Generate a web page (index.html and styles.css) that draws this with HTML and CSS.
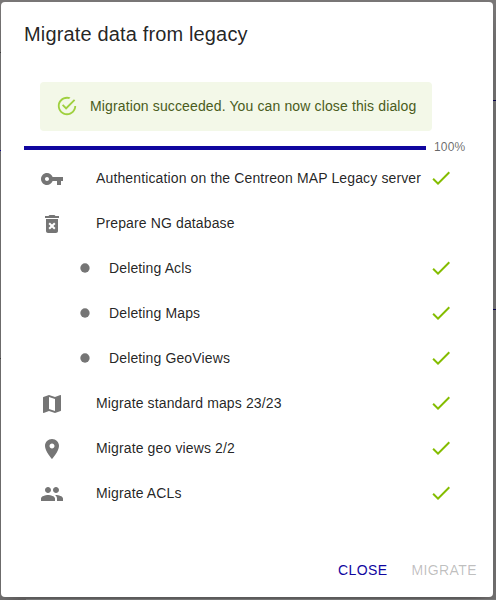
FILE: index.html
```html
<!DOCTYPE html>
<html lang="en">
<head>
<meta charset="utf-8">
<title>Migrate data from legacy</title>
<link rel="stylesheet" href="styles.css">
</head>
<body>
<svg class="symbols" aria-hidden="true">
  <symbol id="check" viewBox="0 0 24 24"><path d="M9 16.17 4.83 12l-1.42 1.41L9 19 21 7l-1.41-1.41z"/></symbol>
</svg>
<i class="mark left m1"></i><i class="mark left m2"></i><i class="mark left m3"></i>
<i class="mark right m4"></i><i class="mark right m5"></i>
<main class="dialog" role="dialog">
  <h2 class="title">Migrate data from legacy</h2>
  <div class="alert">
    <svg class="alert-icon" viewBox="0 0 24 24"><path d="M20 12c0 4.42-3.58 8-8 8s-8-3.58-8-8 3.58-8 8-8c.76 0 1.5.11 2.2.31l1.57-1.57C14.61 2.26 13.34 2 12 2 6.48 2 2 6.48 2 12s4.48 10 10 10 10-4.48 10-10h-2zM7.91 10.08 6.5 11.5 11 16 21 6l-1.41-1.42L11 13.17z"/></svg>
    <span>Migration succeeded. You can now close this dialog</span>
  </div>
  <div class="progress"><div class="bar"></div><span class="percent">100%</span></div>
  <ul class="steps">
    <li class="step">
      <svg class="icon" viewBox="0 0 24 24"><path d="M12.65 10C11.83 7.67 9.61 6 7 6c-3.31 0-6 2.69-6 6s2.69 6 6 6c2.61 0 4.83-1.67 5.65-4H17v4h4v-4h2v-4H12.65zM7 14c-1.1 0-2-.9-2-2s.9-2 2-2 2 .9 2 2-.9 2-2 2z"/></svg>
      <span class="label">Authentication on the Centreon MAP Legacy server</span><svg class="check"><use href="#check"/></svg>
    </li>
    <li class="step">
      <svg class="icon" viewBox="0 0 24 24"><path d="M6 19c0 1.1.9 2 2 2h8c1.1 0 2-.9 2-2V7H6v12zm2.46-7.12 1.41-1.41L12 12.59l2.12-2.12 1.41 1.41L13.41 14l2.12 2.12-1.41 1.41L12 15.41l-2.12 2.12-1.41-1.41L10.59 14l-2.13-2.12zM15.5 4l-1-1h-5l-1 1H5v2h14V4z"/></svg>
      <span class="label">Prepare NG database</span>
    </li>
    <li class="step sub"><svg class="dot" viewBox="0 0 24 24"><circle cx="12" cy="12" r="8"/></svg><span class="label">Deleting Acls</span><svg class="check"><use href="#check"/></svg></li>
    <li class="step sub"><svg class="dot" viewBox="0 0 24 24"><circle cx="12" cy="12" r="8"/></svg><span class="label">Deleting Maps</span><svg class="check"><use href="#check"/></svg></li>
    <li class="step sub"><svg class="dot" viewBox="0 0 24 24"><circle cx="12" cy="12" r="8"/></svg><span class="label">Deleting GeoViews</span><svg class="check"><use href="#check"/></svg></li>
    <li class="step">
      <svg class="icon" viewBox="0 0 24 24"><path d="m20.5 3-.16.03L15 5.1 9 3 3.36 4.9c-.21.07-.36.25-.36.48V20.5c0 .28.22.5.5.5l.16-.03L9 18.9l6 2.1 5.64-1.9c.21-.07.36-.25.36-.48V3.5c0-.28-.22-.5-.5-.5zM15 19l-6-2.11V5l6 2.11V19z"/></svg>
      <span class="label">Migrate standard maps 23/23</span><svg class="check"><use href="#check"/></svg>
    </li>
    <li class="step">
      <svg class="icon" viewBox="0 0 24 24"><path d="M12 2C8.13 2 5 5.13 5 9c0 5.25 7 13 7 13s7-7.75 7-13c0-3.87-3.13-7-7-7zm0 9.5c-1.38 0-2.5-1.12-2.5-2.5s1.12-2.5 2.5-2.5 2.5 1.12 2.5 2.5-1.12 2.5-2.5 2.5z"/></svg>
      <span class="label">Migrate geo views 2/2</span><svg class="check"><use href="#check"/></svg>
    </li>
    <li class="step">
      <svg class="icon" viewBox="0 0 24 24"><path d="M16 11c1.66 0 2.99-1.34 2.99-3S17.66 5 16 5s-3 1.34-3 3 1.34 3 3 3zm-8 0c1.66 0 2.99-1.34 2.99-3S9.66 5 8 5 5 6.34 5 8s1.34 3 3 3zm0 2c-2.33 0-7 1.17-7 3.5V19h14v-2.5C15 14.17 10.33 13 8 13zm8 0c-.29 0-.62.02-.97.05 1.16.84 1.97 1.97 1.97 3.45V19h6v-2.5c0-2.33-4.67-3.5-7-3.5z"/></svg>
      <span class="label">Migrate ACLs</span><svg class="check"><use href="#check"/></svg>
    </li>
  </ul>
  <div class="actions"><button class="close">CLOSE</button><button class="migrate" disabled>MIGRATE</button></div>
</main>
<i class="page-edge"></i>
</body>
</html>
```
FILE: styles.css
```css
* { box-sizing: border-box; }
body {
  margin: 0;
  width: 496px;
  height: 600px;
  padding: 2px 3px 3px 1px;
  overflow: hidden;
  position: relative;
  background: #7a7878;
  font-family: "Liberation Sans", Arial, sans-serif;
  color: rgba(0, 0, 0, .87);
}
svg { fill: currentColor; flex: none; display: block; }
.symbols { position: absolute; width: 0; height: 0; }
.mark { position: absolute; height: 1px; background: #10069f; }
.left { left: 0; width: 1px; }
.right { right: 0; width: 3px; background: #08034f; }
.m1 { top: 52px; background: #444; }
.m2 { top: 150px; }
.m3 { top: 358px; background: #444; }
.m4 { top: 100px; }
.m5 { top: 309px; }
.page-edge { position: absolute; bottom: 0; left: 26px; right: 0; height: 1px; background: #777; }
.dialog {
  position: relative;
  width: 492px;
  height: 595px;
  background: #fff;
  border-radius: 4px;
  box-shadow: 0 11px 15px -7px rgba(0,0,0,.2), 0 24px 38px 3px rgba(0,0,0,.14);
}
.title {
  margin: 0;
  padding: 16px 23px;
  font-size: 20px;
  line-height: 32px;
  font-weight: 400;
  letter-spacing: .15px;
}
.alert {
  margin: 16px 0 0 39px;
  width: 392px;
  height: 49px;
  padding: 0 0 1px 16px;
  display: flex;
  align-items: center;
  border-radius: 4px;
  background: #f3f8e8;
  color: #4a5c20;
  font-size: 14px;
  letter-spacing: .13px;
}
.alert-icon { width: 22px; height: 22px; margin-right: 12px; color: #9fd03f; }
.progress { height: 20px; margin: 6px 0 0 23px; display: flex; align-items: center; }
.bar { width: 402px; height: 4px; margin-top: 2px; background: #10069f; }
.percent { margin-left: 8px; font-size: 12px; color: rgba(0,0,0,.6); letter-spacing: .15px; }
.steps { list-style: none; margin: -2px 0 0; padding: 0 40px 0 39px; }
.step { height: 45px; display: flex; align-items: center; font-size: 14px; letter-spacing: .13px; }
.icon { width: 24px; height: 24px; margin: 3px 32px 0 0; color: #757575; }
.label { white-space: nowrap; }
.sub { padding-left: 37.5px; }
.dot { width: 14px; height: 14px; margin: 1px 17.5px 0 0; color: #757575; }
.check { width: 24px; height: 24px; margin-left: auto; color: #84bd00; }
.actions { display: flex; justify-content: flex-end; height: 52px; padding-right: 8px; margin-top: 37px; }
.actions button {
  border: 0;
  background: none;
  height: 36px;
  padding: 6px 8px;
  font: 14px "Liberation Sans", Arial, sans-serif;
  letter-spacing: .4px;
}
.actions .close { color: #10069f; margin-right: 8px; }
.actions .migrate { color: rgba(0, 0, 0, .26); }
```
